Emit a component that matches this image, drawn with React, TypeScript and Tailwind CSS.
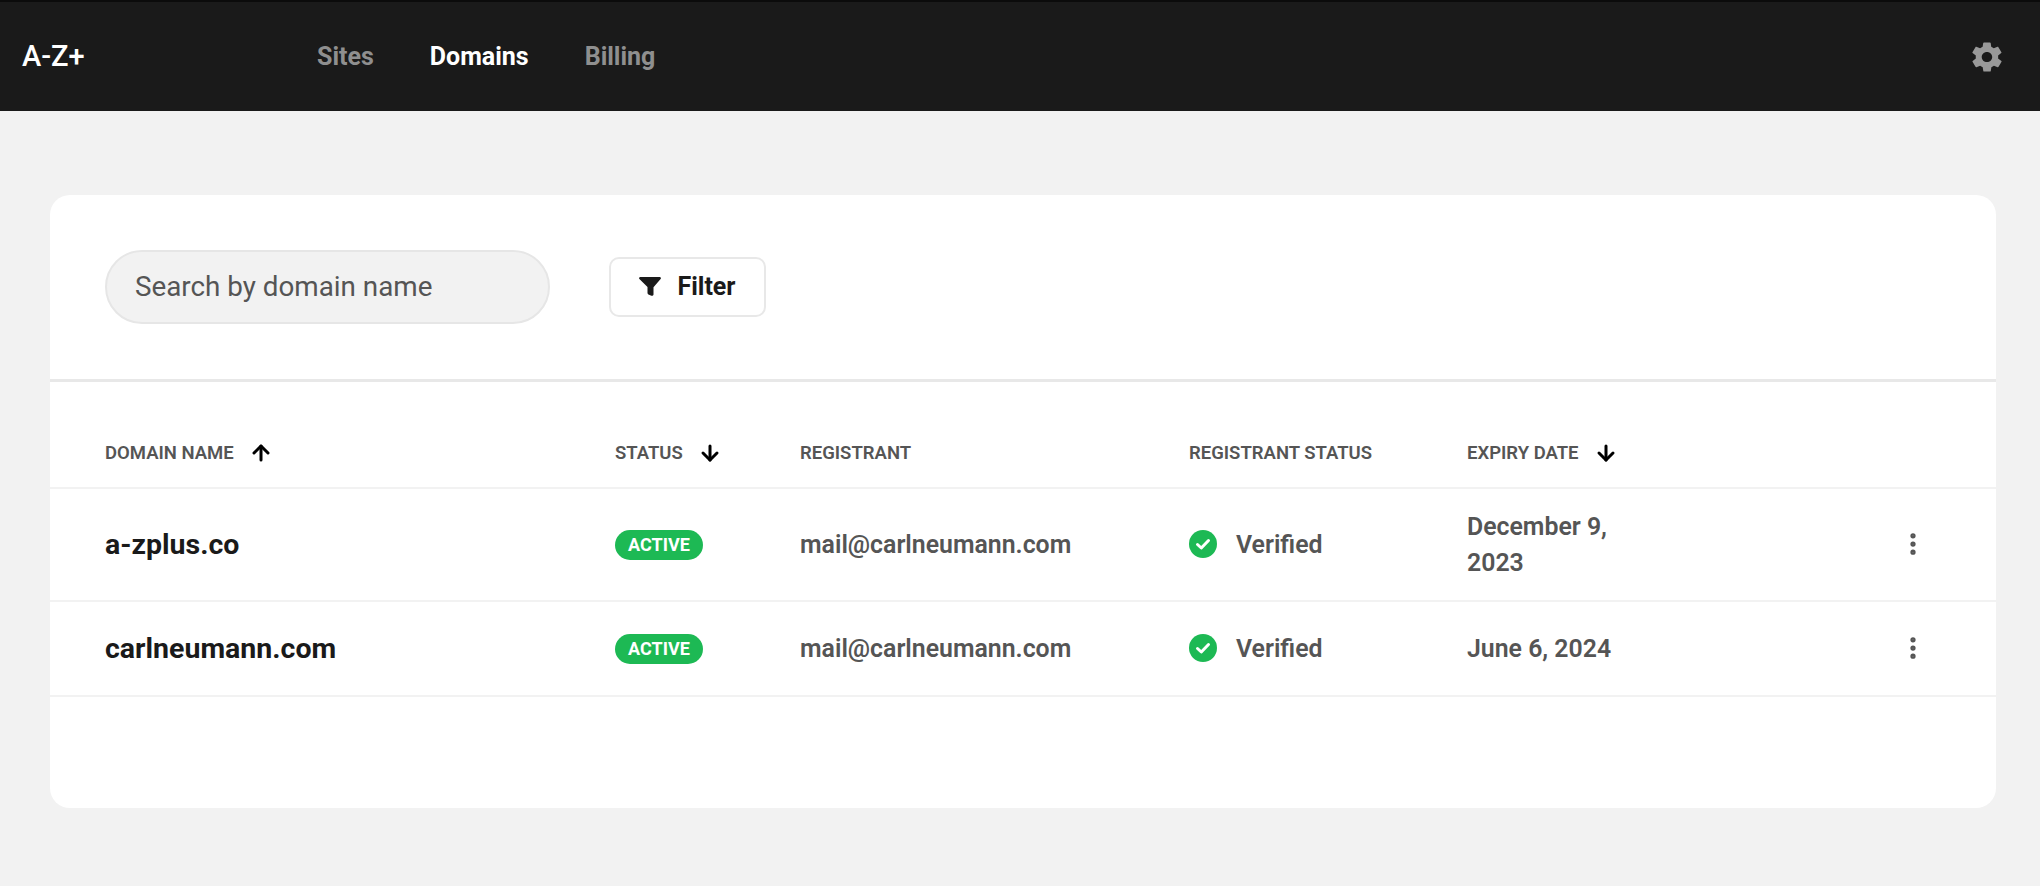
import { ArrowDown, ArrowUp, MoreVertical } from 'lucide-react'
import { IoMdSettings } from 'react-icons/io'

const rowGrid = 'grid grid-cols-[510px_185px_389px_278px_170px_1fr] pl-[55px] pr-[55px]'

const rows = [
  { domain: 'a-zplus.co', email: 'mail@carlneumann.com', expiry: 'December 9, 2023', height: 'h-[113px]' },
  { domain: 'carlneumann.com', email: 'mail@carlneumann.com', expiry: 'June 6, 2024', height: 'h-[95px]' },
]

function HeaderCell({ label, dir }: { label: string; dir?: 'up' | 'down' }) {
  return (
    <div className="flex items-center gap-[15px] text-[18.5px] font-semibold uppercase leading-[24px] text-[#555555]">
      {label}
      {dir === 'up' && <ArrowUp className="h-[24px] w-[24px] text-black" strokeWidth={3} />}
      {dir === 'down' && <ArrowDown className="h-[24px] w-[24px] text-black" strokeWidth={3} />}
    </div>
  )
}

function FilterIcon() {
  return (
    <svg viewBox="0 0 22 19" className="h-[19px] w-[22px] fill-current">
      <path d="M1.4 0h19.2c1.1 0 1.7 1.2 1 2.1L14.500 10.200v7.300c0 .9-1.300 1.500-2.100 1.200l-3-1.300c-.6-.2-.9-.7-.9-1.300v-6L.4 2.100C-.3 1.200.3 0 1.400 0z" />
    </svg>
  )
}

function VerifiedIcon() {
  return (
    <svg viewBox="0 0 28 28" className="h-[28px] w-[28px]">
      <circle cx="14" cy="14" r="14" fill="#1db954" />
      <path d="M8.500 14.500l3.800 3.500 7.200-7.500" fill="none" stroke="#ffffff" strokeWidth="3" strokeLinecap="round" strokeLinejoin="round" />
    </svg>
  )
}

export default function App() {
  return (
    <div className="min-h-[886px] bg-[#f2f2f2] font-['Roboto',sans-serif]">
      <header className="flex h-[111px] items-center border-t-2 border-[#0b0b0b] bg-[#1a1a1a] pl-[22px] pr-[35px]">
        <div className="w-[295px] text-[29px] font-medium text-white">A-Z+</div>
        <nav className="flex items-center gap-[56px] text-[25px] font-bold">
          <a className="text-[#8f8f8f]">Sites</a>
          <a className="text-white">Domains</a>
          <a className="text-[#8f8f8f]">Billing</a>
        </nav>
        <IoMdSettings className="ml-auto h-[36px] w-[36px] text-[#999999]" />
      </header>

      <main className="pl-[50px] pr-[44px] pt-[84px]">
        <div className="h-[613px] rounded-[20px] bg-white">
          <div className="flex h-[187px] items-center border-b-[3px] border-[#e8e8e8] pb-[1px] pl-[55px]">
            <div className="flex h-[74px] w-[445px] items-center rounded-full border-2 border-[#e6e6e6] bg-[#f2f2f2] pl-[28px] text-[27.800px] text-[#555555]">
              Search by domain name
            </div>
            <button className="ml-[59px] flex h-[60px] w-[157px] items-center justify-center gap-[16px] rounded-[10px] border-2 border-[#e8e8e8] bg-white text-[25px] font-bold text-[#1a1a1a]">
              <FilterIcon />
              Filter
            </button>
          </div>

          <div className={`${rowGrid} h-[107px] items-end border-b-2 border-[#f2f2f2] pb-[22px]`}>
            <HeaderCell label="Domain name" dir="up" />
            <HeaderCell label="Status" dir="down" />
            <HeaderCell label="Registrant" />
            <HeaderCell label="Registrant status" />
            <HeaderCell label="Expiry date" dir="down" />
            <div />
          </div>

          {rows.map((r) => (
            <div key={r.domain} className={`${rowGrid} ${r.height} items-center border-b-2 border-[#f2f2f2]`}>
              <div className="pt-[1px] text-[28.500px] font-bold text-[#1a1a1a]">{r.domain}</div>
              <div>
                <span className="inline-flex h-[30px] w-[88px] items-center justify-center rounded-full bg-[#1db954] text-[18px] font-bold uppercase text-white">
                  Active
                </span>
              </div>
              <div className="text-[24.850px] font-semibold text-[#555555]">{r.email}</div>
              <div className="flex items-center gap-[19px] text-[24.850px] font-semibold text-[#555555]">
                <VerifiedIcon />
                Verified
              </div>
              <div className="text-[24.850px] font-semibold leading-[36px] text-[#555555]">{r.expiry}</div>
              <div className="flex justify-end pb-[2px] pr-[14px]">
                <MoreVertical className="h-[28px] w-[28px] text-[#555555]" strokeWidth={2.5} />
              </div>
            </div>
          ))}
        </div>
      </main>
    </div>
  )
}
